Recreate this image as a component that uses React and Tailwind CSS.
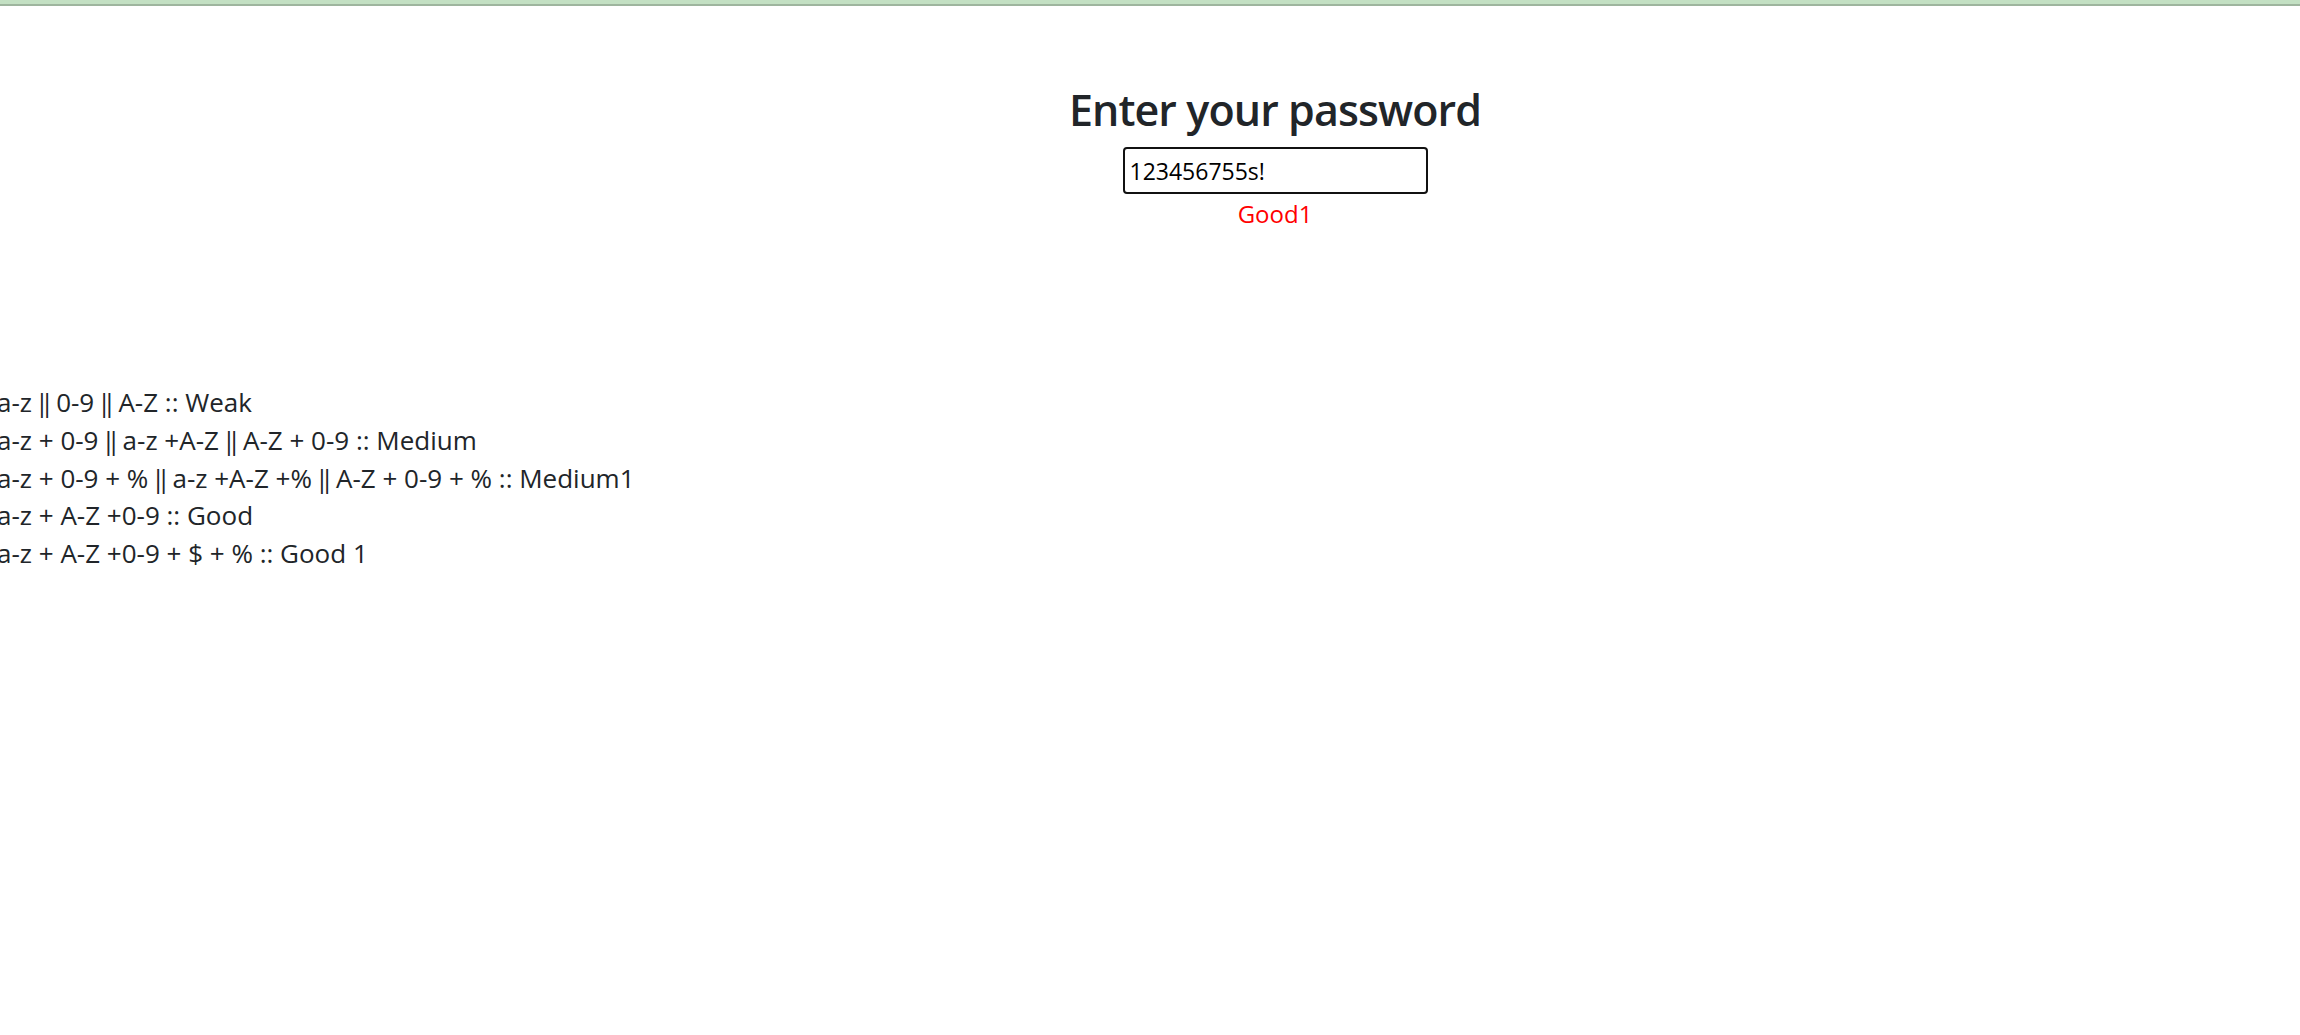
import React, { useState } from 'react';

// Strength rules shown under the form
const RULES = [
    'a-z || 0-9 || A-Z :: Weak',
    'a-z + 0-9 || a-z +A-Z || A-Z + 0-9 :: Medium',
    'a-z + 0-9 + % || a-z +A-Z +% || A-Z + 0-9 + % :: Medium1',
    'a-z + A-Z +0-9 :: Good',
    'a-z + A-Z +0-9 + $ + % :: Good 1',
];

// Open Sans draws "||" much wider than the original font, so tighten the pairs
function Rule({ text }) {
    const parts = text.split(' || ');
    return (
        <li>
            {parts.map((part, i) => (
                <React.Fragment key={i}>
                    {i > 0 && (
                        <>
                            <span className="tracking-[-4px]">{' '}</span>
                            <span className="tracking-[-9px]">|</span>
                            <span className="tracking-[-5px]">|</span>
                            {' '}
                        </>
                    )}
                    {part}
                </React.Fragment>
            ))}
        </li>
    );
}

function App() {
    const [password, setPassword] = useState('123456755s!');

    return (
        <div className="min-h-screen bg-white font-['Open_Sans','Noto_Sans',sans-serif] text-[#212529]">
            <div className="h-[4px] bg-[#c3e0c3]" />
            <div className="h-[2px] bg-[#9eb59e]" />

            <div className="flex flex-col items-center pl-[250px] pt-[82px]">
                <h2 className="text-[43px] font-semibold leading-[1] tracking-[-0.9px]">Enter your password</h2>
                <input
                    type="text"
                    value={password}
                    onChange={e => setPassword(e.target.value)}
                    className="mt-[16px] w-[305px] h-[47px] border-2 border-[#111] rounded-[4px] px-[5px] text-[23px] text-black outline-none"
                />
                <div className="mt-[3px] text-[24px] text-[#ff0000] leading-[34px]">Good1</div>
            </div>

            <ul className="mt-[153px] -ml-[3px] text-[26px] leading-[37.8px]">
                {RULES.map(rule => (
                    <Rule key={rule} text={rule} />
                ))}
            </ul>
        </div>
    );
}

export default App;
